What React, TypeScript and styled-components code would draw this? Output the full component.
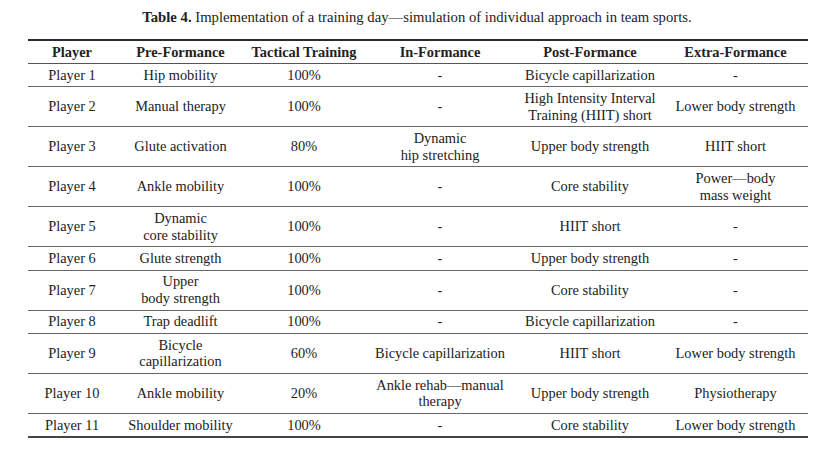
import React from 'react'
import styled, { createGlobalStyle } from 'styled-components'

const GlobalStyle = createGlobalStyle`
  html, body {
    margin: 0;
    padding: 0;
    background: #ffffff;
  }
  body {
    font-family: "Liberation Serif", "Times New Roman", serif;
    color: #222222;
  }
`

type RowData = {
  player: string
  pre: string[]
  tactical: string
  inForm: string[]
  post: string[]
  extra: string[]
}

const rows: RowData[] = [
  { player: 'Player 1', pre: ['Hip mobility'], tactical: '100%', inForm: ['-'], post: ['Bicycle capillarization'], extra: ['-'] },
  { player: 'Player 2', pre: ['Manual therapy'], tactical: '100%', inForm: ['-'], post: ['High Intensity Interval', 'Training (HIIT) short'], extra: ['Lower body strength'] },
  { player: 'Player 3', pre: ['Glute activation'], tactical: '80%', inForm: ['Dynamic', 'hip stretching'], post: ['Upper body strength'], extra: ['HIIT short'] },
  { player: 'Player 4', pre: ['Ankle mobility'], tactical: '100%', inForm: ['-'], post: ['Core stability'], extra: ['Power\u2014body', 'mass weight'] },
  { player: 'Player 5', pre: ['Dynamic', 'core stability'], tactical: '100%', inForm: ['-'], post: ['HIIT short'], extra: ['-'] },
  { player: 'Player 6', pre: ['Glute strength'], tactical: '100%', inForm: ['-'], post: ['Upper body strength'], extra: ['-'] },
  { player: 'Player 7', pre: ['Upper', 'body strength'], tactical: '100%', inForm: ['-'], post: ['Core stability'], extra: ['-'] },
  { player: 'Player 8', pre: ['Trap deadlift'], tactical: '100%', inForm: ['-'], post: ['Bicycle capillarization'], extra: ['-'] },
  { player: 'Player 9', pre: ['Bicycle', 'capillarization'], tactical: '60%', inForm: ['Bicycle capillarization'], post: ['HIIT short'], extra: ['Lower body strength'] },
  { player: 'Player 10', pre: ['Ankle mobility'], tactical: '20%', inForm: ['Ankle rehab\u2014manual', 'therapy'], post: ['Upper body strength'], extra: ['Physiotherapy'] },
  { player: 'Player 11', pre: ['Shoulder mobility'], tactical: '100%', inForm: ['-'], post: ['Core stability'], extra: ['Lower body strength'] },
]

const columns = [
  { title: 'Player', width: 88 },
  { title: 'Pre-Formance', width: 129 },
  { title: 'Tactical Training', width: 118 },
  { title: 'In-Formance', width: 154 },
  { title: 'Post-Formance', width: 146 },
  { title: 'Extra-Formance', width: 145 },
]

const Lines = ({ lines }: { lines: string[] }) => (
  <>
    {lines.map((l, i) => (
      <React.Fragment key={i}>
        {i > 0 && <br />}
        {l}
      </React.Fragment>
    ))}
  </>
)

export default function App() {
  return (
    <>
      <GlobalStyle />
      <S.Page>
        <S.Caption>
          <S.CaptionLabel>Table 4.</S.CaptionLabel> Implementation of a training day—simulation of individual approach in team sports.
        </S.Caption>
        <S.Table>
          <colgroup>
            {columns.map(c => (
              <col key={c.title} style={{ width: c.width }} />
            ))}
          </colgroup>
          <thead>
            <tr>
              {columns.map(c => (
                <S.HeadCell key={c.title}>{c.title}</S.HeadCell>
              ))}
            </tr>
          </thead>
          <tbody>
            {rows.map((r, i) => (
              <S.Row key={r.player} last={i === rows.length - 1}>
                <S.Cell>{r.player}</S.Cell>
                <S.Cell><Lines lines={r.pre} /></S.Cell>
                <S.Cell>{r.tactical}</S.Cell>
                <S.Cell><Lines lines={r.inForm} /></S.Cell>
                <S.Cell><Lines lines={r.post} /></S.Cell>
                <S.Cell><Lines lines={r.extra} /></S.Cell>
              </S.Row>
            ))}
          </tbody>
        </S.Table>
      </S.Page>
    </>
  )
}

interface RowProps {
  last?: boolean
}

const S = {
  Page: styled.div`
    width: 834px;
    height: 457px;
    display: flex;
    flex-direction: column;
    align-items: center;
    padding-top: 9px;
    box-sizing: border-box;
  `,
  Caption: styled.div`
    font-size: 14.7px;
    line-height: 16px;
    color: #222;
    margin-left: 0;
  `,
  CaptionLabel: styled.span`
    font-weight: 700;
  `,
  Table: styled.table`
    width: 780px;
    margin-top: 14px;
    margin-left: 2px;
    border-collapse: collapse;
    table-layout: fixed;
    border-top: 2px solid #2a2a2a;
    font-size: 14.4px;
    color: #222;
  `,
  HeadCell: styled.th`
    font-weight: 700;
    text-align: center;
    line-height: 16.7px;
    padding: 2.6px 0 2.7px;
    border-bottom: 1px solid #555;
    white-space: nowrap;
  `,
  Row: styled.tr<RowProps>`
    border-bottom: ${p => (p.last ? '2px solid #444' : '1px solid #666')};
  `,
  Cell: styled.td`
    text-align: center;
    vertical-align: middle;
    line-height: 16.7px;
    padding: 2.8px 0;
    white-space: nowrap;
  `,
}
